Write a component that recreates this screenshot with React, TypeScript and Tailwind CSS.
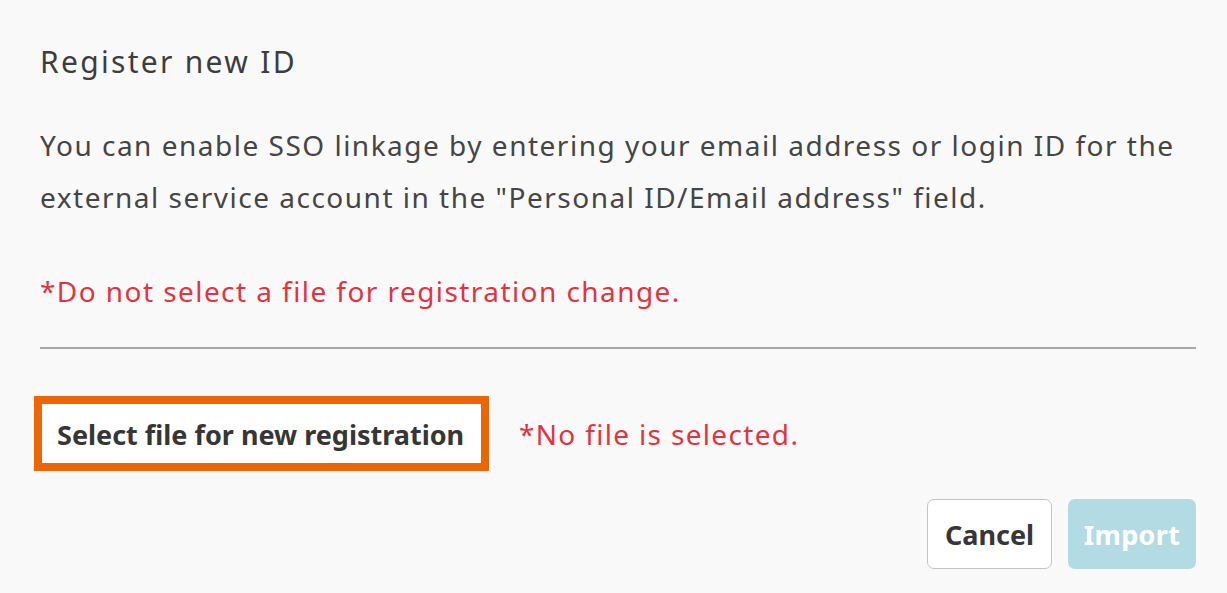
import React from "react";

export default function App() {
  return (
    <div
      className="w-[1227px] h-[593px] bg-[#f9f9f9] overflow-hidden pl-[40px] pr-[31px] pt-[39px] text-[#3b3b3b]"
      style={{ fontFamily: '"Noto Sans", "Open Sans", sans-serif' }}
    >
      <h1 className="text-[30px] leading-[45px] font-normal tracking-[2.3px] text-[#3d3d3d]">Register new ID</h1>
      <p className="mt-[35px] text-[28px] leading-[52px] tracking-[1.5px] text-[#454545]">
        You can enable SSO linkage by entering your email address or login ID for the external service account in the "Personal ID/Email address" field.
      </p>
      <p className="mt-[42px] text-[28px] leading-[52px] tracking-[1.43px] text-[#e2343e]">
        *Do not select a file for registration change.
      </p>
      <div className="mt-[30px] h-[2px] bg-[#a9a9a9]" />
      <div className="mt-[47px] flex items-center">
        <div className="-ml-[6px] border-[8px] border-[#ec6608] bg-white">
          <button className="h-[59px] w-[439px] flex items-center pl-[15px] pt-[3px] text-[27px] font-bold text-[#363636] bg-white whitespace-nowrap">
            Select file for new registration
          </button>
        </div>
        <span className="ml-[30px] text-[28px] leading-[52px] tracking-[1.33px] text-[#e2343e]">*No file is selected.</span>
      </div>
      <div className="mt-[28px] flex justify-end gap-[16px]">
        <button className="w-[125px] h-[70px] pt-[3px] rounded-[7px] border border-[#c4c4c4] bg-white text-[27px] font-bold text-[#363636]">
          Cancel
        </button>
        <button className="w-[128px] h-[70px] pt-[3px] rounded-[7px] bg-[#b3dbe3] text-[27px] font-bold tracking-[0.3px] text-white">
          Import
        </button>
      </div>
    </div>
  );
}
